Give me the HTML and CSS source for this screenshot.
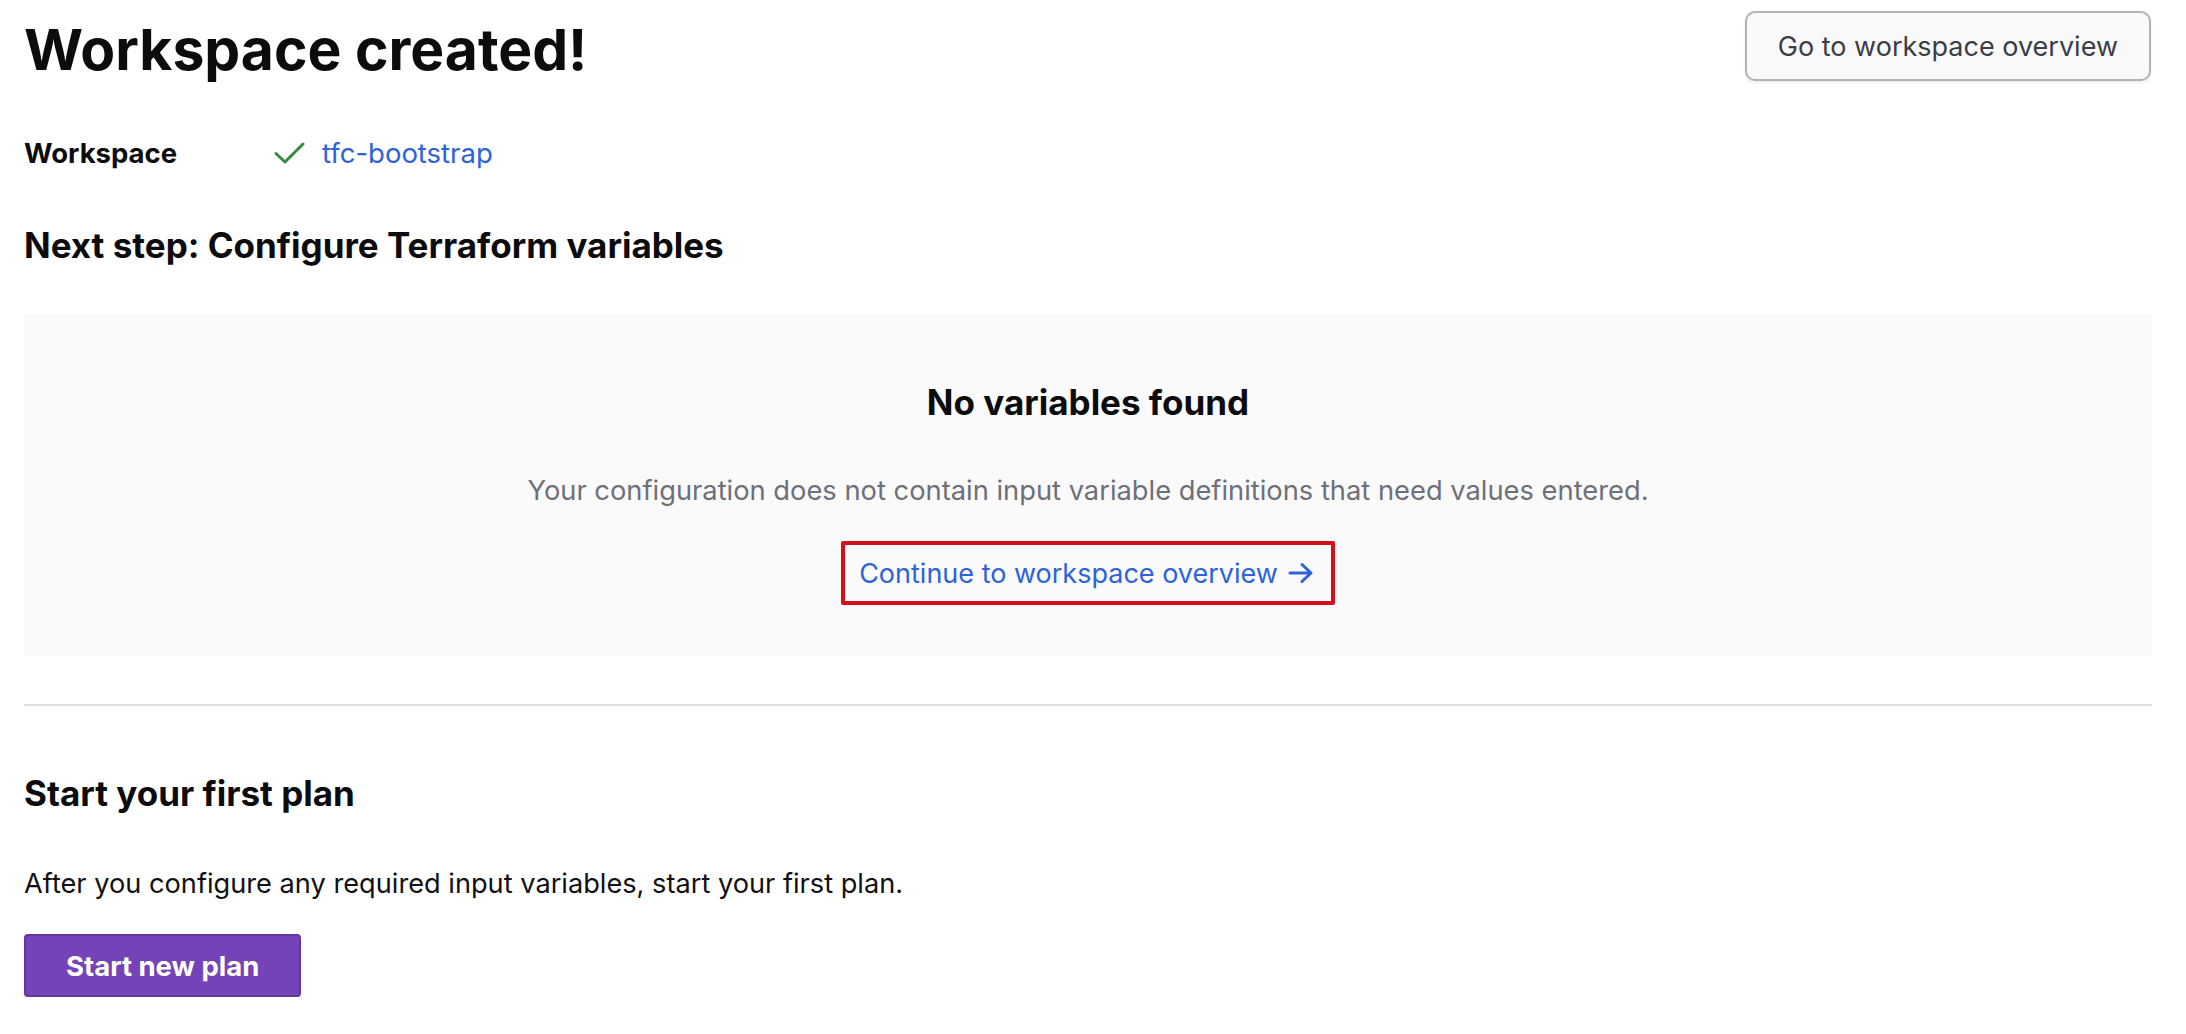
FILE: index.html
```html
<!DOCTYPE html>
<html lang="en">
<head>
<meta charset="utf-8">
<title>Workspace created!</title>
<link rel="stylesheet" href="styles.css">
</head>
<body>
<main class="page">
  <header class="top">
    <h1 class="title">Workspace created!</h1>
    <button class="btn-secondary" type="button">Go to workspace overview</button>
  </header>

  <div class="meta">
    <span class="meta-label">Workspace</span>
    <span class="meta-value">
      <svg class="check" width="32" height="24" viewBox="0 0 32 24" aria-hidden="true">
        <path d="M2 12.5 L11 21 L29 3" fill="none" stroke="#37893c" stroke-width="3" stroke-linecap="round" stroke-linejoin="round"/>
      </svg>
      <a class="link" href="#">tfc-bootstrap</a>
    </span>
  </div>

  <h2 class="section-title first">Next step: Configure Terraform variables</h2>

  <section class="empty">
    <h3 class="empty-title">No variables found</h3>
    <p class="empty-text">Your configuration does not contain input variable definitions that need values entered.</p>
    <a class="continue" href="#">
      <span>Continue to workspace overview</span>
      <svg class="arrow" width="26" height="22" viewBox="0 0 26 22" aria-hidden="true">
        <path d="M2 11 H23 M14 2.5 L23 11 L14 19.5" fill="none" stroke="#2e62d9" stroke-width="3" stroke-linecap="round" stroke-linejoin="round"/>
      </svg>
    </a>
  </section>

  <hr class="divider">

  <h2 class="section-title second">Start your first plan</h2>
  <p class="plan-text">After you configure any required input variables, start your first plan.</p>
  <button class="btn-primary" type="button">Start new plan</button>
</main>
</body>
</html>
```

FILE: styles.css
```css
* { box-sizing: border-box; }

html, body {
  margin: 0;
  padding: 0;
  background: #ffffff;
}

body {
  font-family: Inter, "Noto Sans", "Liberation Sans", sans-serif;
  color: #0c0c0e;
}

.page {
  padding: 11px 34px 0 24px;
}

.top {
  display: flex;
  justify-content: space-between;
  align-items: flex-start;
}

.title {
  margin: 6px 0 0 0;
  font-size: 57px;
  line-height: 66px;
  font-weight: 700;
}

.btn-secondary {
  height: 70px;
  padding: 0 31px;
  font-family: inherit;
  font-size: 27px;
  color: #3b3d45;
  background: #f9f9fa;
  border: 2px solid #b2b3b8;
  border-radius: 10px;
  box-shadow: 0 2px 3px rgba(0, 0, 0, 0.08);
  margin-right: 1px;
}

.meta {
  display: flex;
  align-items: center;
  margin-top: 50px;
  height: 40px;
}

.meta-label {
  width: 250px;
  font-size: 27.5px;
  font-weight: 700;
  line-height: 40px;
}

.meta-value {
  display: flex;
  align-items: center;
  gap: 16px;
}

.check { display: block; }

.link {
  font-size: 27.5px;
  line-height: 40px;
  color: #2e62d9;
  text-decoration: none;
}

.section-title {
  margin: 0;
  font-size: 35px;
  line-height: 48px;
  font-weight: 700;
}

.section-title.first { margin-top: 48px; }
.section-title.second { margin-top: 63px; }

.empty {
  margin-top: 45px;
  background: #fafafa;
  padding: 64px 24px 51px;
  display: flex;
  flex-direction: column;
  align-items: center;
}

.empty-title {
  margin: 0;
  font-size: 35px;
  line-height: 48px;
  font-weight: 700;
}

.empty-text {
  margin: 45px 0 0 0;
  font-size: 27.3px;
  line-height: 40px;
  color: #6e7079;
}

.continue {
  margin-top: 30px;
  height: 64px;
  display: flex;
  align-items: center;
  gap: 10px;
  padding: 0 17px 0 14px;
  border: 4px solid #d3111c;
  border-radius: 2px;
  font-size: 27px;
  color: #2e62d9;
  text-decoration: none;
}

.arrow { display: block; }

.divider {
  margin: 48px 0 0 0;
  border: 0;
  height: 2px;
  background: #dddddd;
}

.plan-text {
  margin: 47px 0 0 0;
  font-size: 27.2px;
  line-height: 40px;
  color: #111114;
}

.btn-primary {
  margin-top: 30px;
  height: 63px;
  padding: 0 40px;
  font-family: inherit;
  font-size: 27.5px;
  font-weight: 700;
  color: #ffffff;
  background: #7443b8;
  border: 2px solid #63379f;
  border-radius: 4px;
  box-shadow: 0 4px 2px rgba(190, 192, 200, 0.45);
}
```
